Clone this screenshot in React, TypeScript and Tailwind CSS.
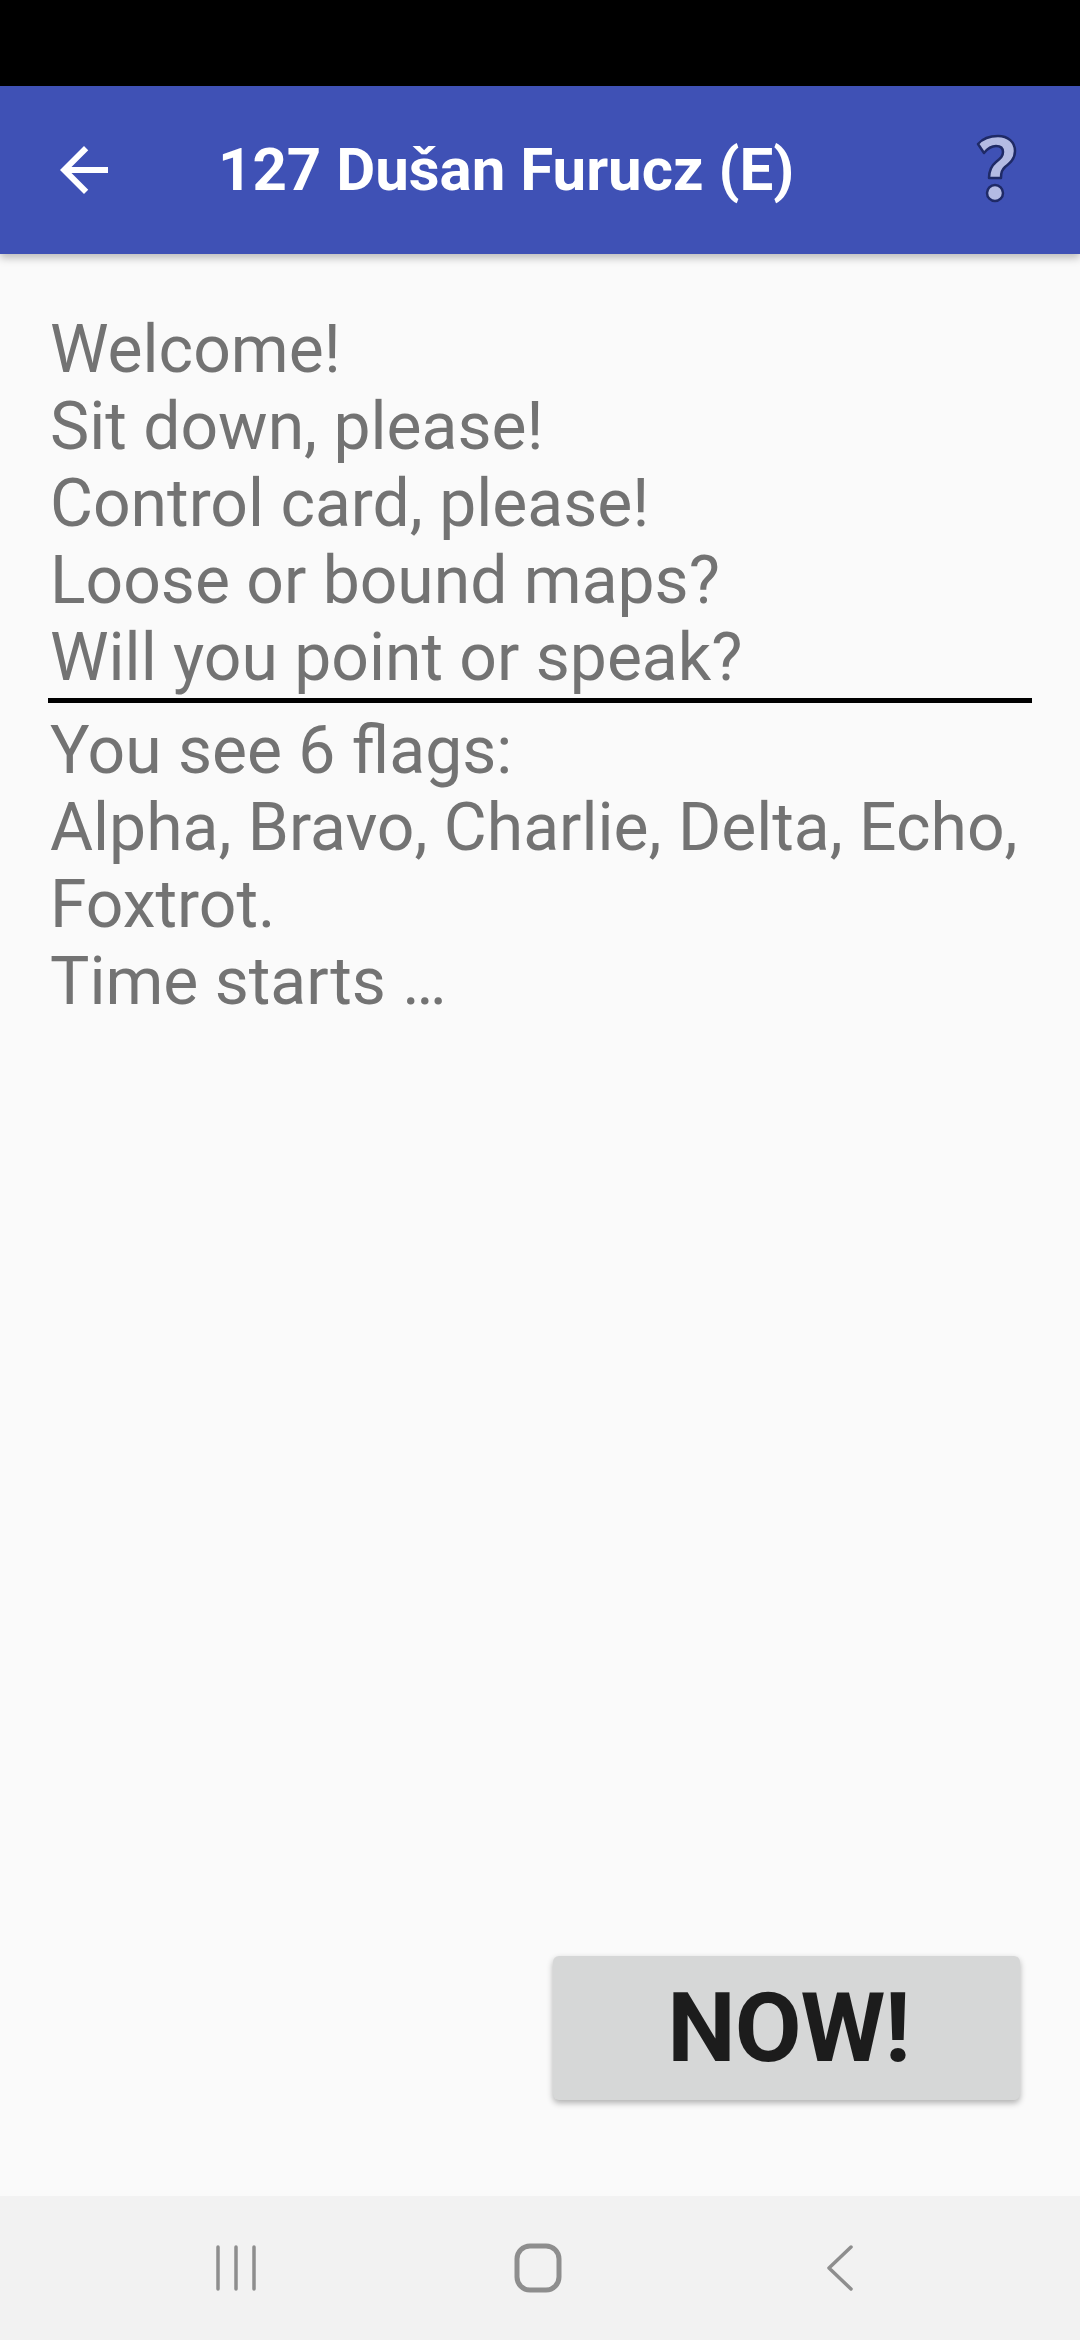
import React from 'react';

function BackArrow() {
  return (
    <svg width="72" height="72" viewBox="0 0 24 24" fill="white">
      <path d="M20 11H7.83l5.59-5.59L12 4l-8 8 8 8 1.41-1.41L7.83 13H20v-2z" />
    </svg>
  );
}

function HelpIcon() {
  return (
    <svg width="44" height="72" viewBox="0 0 44 72">
      <path
        d="M4 10 C10 3 18 2 24 2 C34 2 41 8 41 17 C41 25 36 29 31 33 C28 36 27 38 27 44 L15 44 C15 36 17 32 22 28 C27 24 29 22 29 18 C29 14 26 12 22 12 C17 12 14 14 10 19 Z"
        fill="#B4BBE3"
        stroke="#1F2A66"
        strokeWidth="2.5"
        strokeLinejoin="round"
      />
      <circle cx="21" cy="59" r="8" fill="#B4BBE3" stroke="#1F2A66" strokeWidth="2.5" />
    </svg>
  );
}

function NavBar() {
  return (
    <div className="h-[144px] bg-[#F2F2F2] flex items-center">
      <svg className="ml-[215px]" width="44" height="46" viewBox="0 0 44 46" stroke="#8E8E8E" strokeWidth="3.5" strokeLinecap="round">
        <line x1="3" y1="2" x2="3" y2="44" />
        <line x1="21" y1="2" x2="21" y2="44" />
        <line x1="39" y1="2" x2="39" y2="44" />
      </svg>
      <svg className="ml-[255px]" width="48" height="50" viewBox="0 0 48 50" fill="none" stroke="#8E8E8E" strokeWidth="5">
        <rect x="3" y="3" width="42" height="44" rx="13" />
      </svg>
      <svg className="ml-[264px]" width="28" height="46" viewBox="0 0 28 46" fill="none" stroke="#8E8E8E" strokeWidth="3.5" strokeLinecap="round" strokeLinejoin="round">
        <path d="M25 2 L3 23 L25 44" />
      </svg>
    </div>
  );
}

export default function App() {
  const intro = ['Welcome!', 'Sit down, please!', 'Control card, please!', 'Loose or bound maps?', 'Will you point or speak?'];
  const flags = ['You see 6 flags:', 'Alpha, Bravo, Charlie, Delta, Echo,', 'Foxtrot.', 'Time starts …'];

  return (
    <div className="w-[1080px] h-[2340px] flex flex-col bg-[#FAFAFA] font-['Roboto',sans-serif] overflow-hidden">
      <div className="h-[86px] bg-black" />
      <div className="h-[168px] bg-[#3F51B5] flex items-center shadow-[0_4px_8px_rgba(0,0,0,0.25)] relative z-10">
        <div className="w-[72px] h-[72px] ml-[48px]">
          <BackArrow />
        </div>
        <div className="ml-[98px] text-white font-bold text-[60px] leading-none">127 Dušan Furucz (E)</div>
        <div className="ml-auto mr-[62px] flex items-center">
          <HelpIcon />
        </div>
      </div>

      <div className="flex-1 flex flex-col px-[48px] pt-[57px]">
        <div className="border-b-[5px] border-black pb-[2px]">
          {intro.map((line) => (
            <div key={line} className="text-[66px] leading-[77px] text-[#737373] pl-[2px]">
              {line}
            </div>
          ))}
        </div>
        <div className="mt-[9px]">
          {flags.map((line) => (
            <div key={line} className="text-[66px] leading-[77px] text-[#737373] pl-[2px]">
              {line}
            </div>
          ))}
        </div>
        <div className="flex-1" />
        <div className="flex justify-end pr-[12px] pb-[96px]">
          <button className="w-[467px] h-[144px] bg-[#D6D7D7] rounded-[6px] shadow-[0_3px_6px_rgba(0,0,0,0.3)] text-[#1C1C1C] font-bold text-[97px] tracking-[-1px] leading-none flex items-center justify-center pl-[4px]">
            NOW!
          </button>
        </div>
      </div>

      <NavBar />
    </div>
  );
}
